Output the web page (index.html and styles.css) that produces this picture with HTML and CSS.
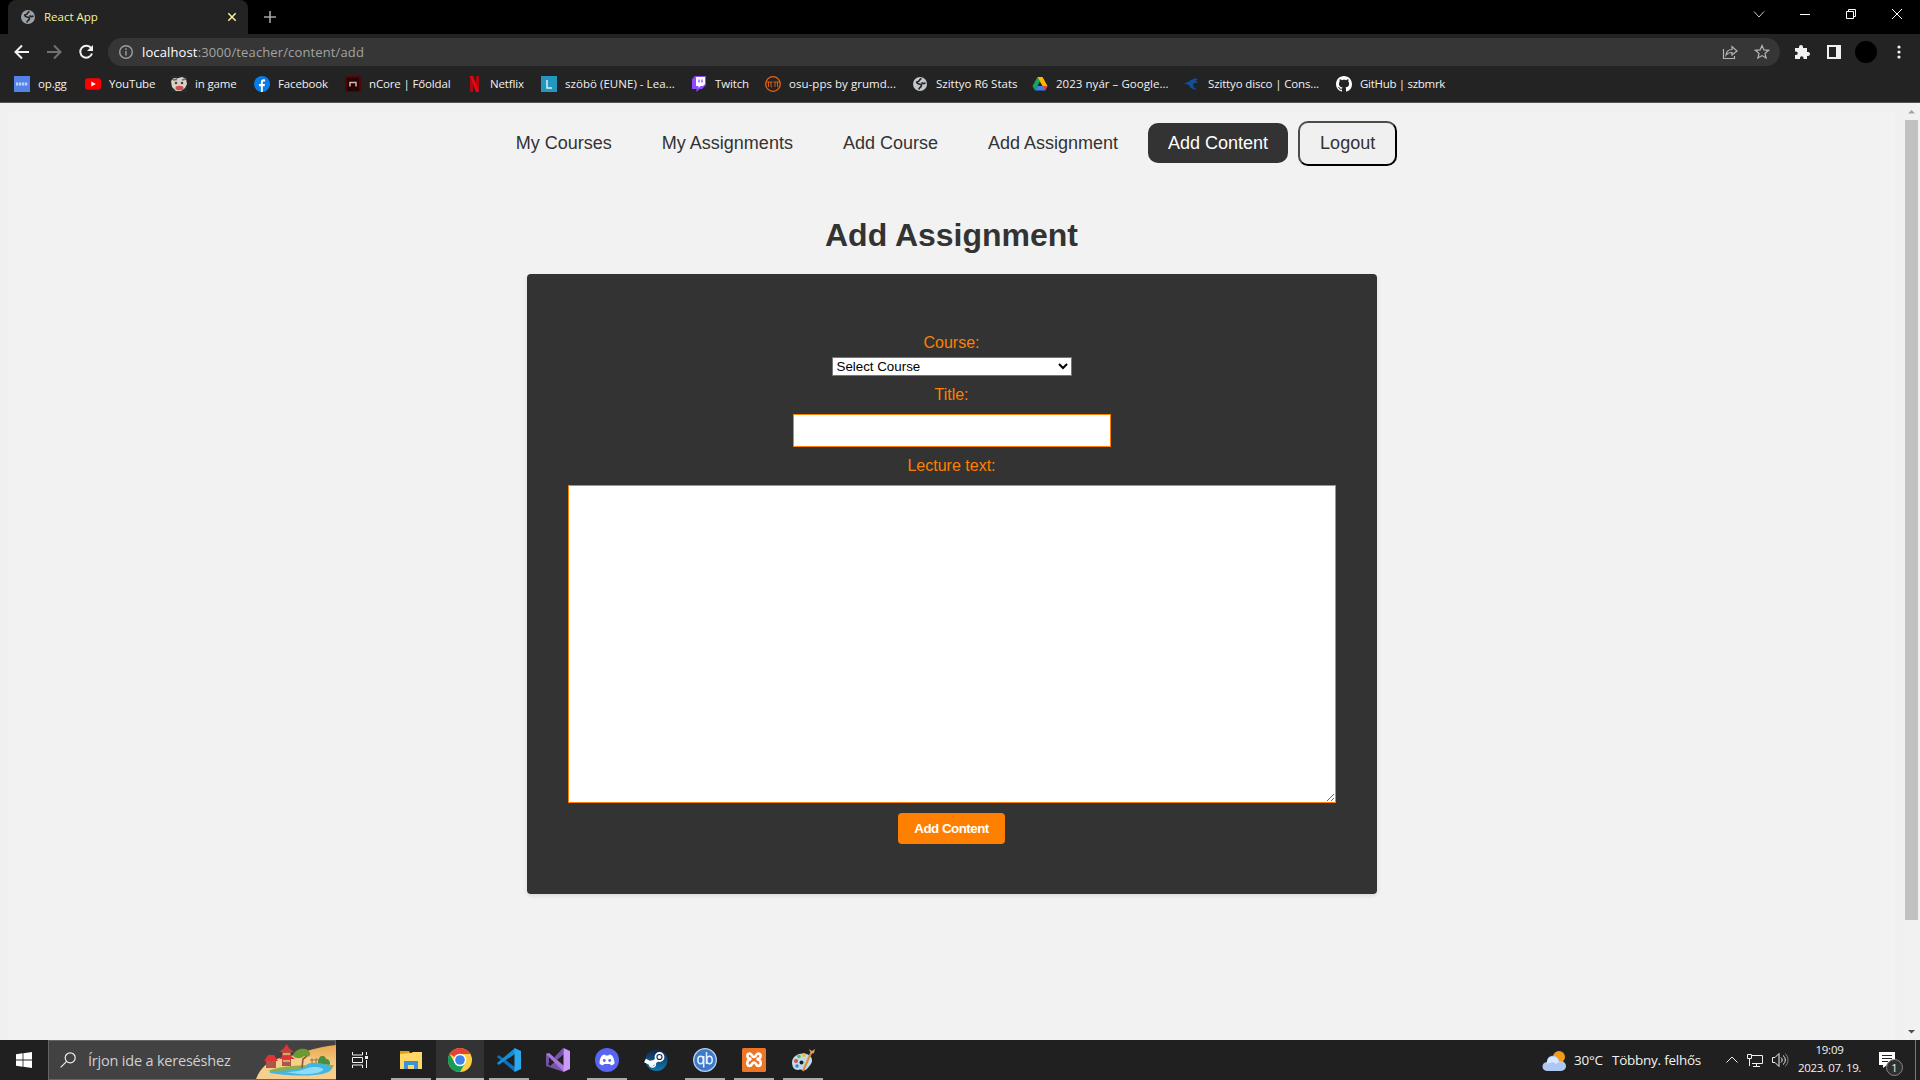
FILE: index.html
```html
<!DOCTYPE html>
<html lang="hu">
<head>
<meta charset="utf-8">
<title>React App</title>
<link rel="stylesheet" href="styles.css">
</head>
<body>
<svg class="defs" aria-hidden="true">
  <symbol id="globe" viewBox="0 0 16 16"><circle cx="8" cy="8" r="7" fill="currentColor"/><path d="M9.500 2.500C7 3 8 5.500 6 5.500S4.500 7.500 7 8s3 1 2 2.500-2 1-2 3M13.500 7c-2 1-3 1-4-.5" fill="none" stroke="#232323" stroke-width="1.700"/></symbol>
</svg>
<header class="browser">
  <div class="tabstrip">
    <div class="tab">
      <svg class="i16 favicon"><use href="#globe"/></svg>
      <span class="tab-title">React App</span>
      <svg class="tab-close" viewBox="0 0 10 10"><path d="M1.3 1.3l7.4 7.4M8.7 1.3 1.3 8.7"/></svg>
    </div>
    <svg class="newtab" viewBox="0 0 12 12"><path d="M6 0v12M0 6h12"/></svg>
    <div class="winbtns">
      <svg viewBox="0 0 12 12"><path d="M1 3.500 6 9l5-5.500"/></svg>
      <svg viewBox="0 0 12 12"><path d="M1 6.500h10"/></svg>
      <svg viewBox="0 0 12 12"><path d="M1.500 3.500h7v7h-7zM3.500 3.500v-2h7v7h-2"/></svg>
      <svg viewBox="0 0 12 12"><path d="M1 1l10 10M11 1 1 11"/></svg>
    </div>
  </div>
  <div class="toolbar">
    <svg class="nav-icon" viewBox="0 0 16 16"><path d="M15 8H2M8 1.500 1.500 8 8 14.500"/></svg>
    <svg class="nav-icon dim" viewBox="0 0 16 16"><path d="M1 8h13M8 1.500 14.500 8 8 14.500"/></svg>
    <svg class="nav-icon" viewBox="0 0 16 16"><path d="M13.200 4.200A6 6 0 1 0 14 9.500"/><path class="solid" d="M15 1v6H9z"/></svg>
    <div class="omnibox">
      <svg class="i16 info" viewBox="0 0 16 16"><circle cx="8" cy="8" r="6.300"/><path d="M8 7v4.500M8 4.300v1.600"/></svg>
      <span class="url"><b>localhost</b>:3000/teacher/content/add</span>
      <svg class="i16 share" viewBox="0 0 16 16"><path d="M1.500 5v9.500h11V12M4 11c.5-4 2.700-5.500 6-5.500V2.500L15 7l-5 4V8.500C7.500 8.500 5.500 9 4 11z"/></svg>
      <svg class="i16 star" viewBox="0 0 16 16"><path d="m8 1.600 1.900 4.300 4.700.4-3.600 3.100 1.100 4.600L8 11.600 3.900 14 5 9.400 1.400 6.300l4.700-.4z"/></svg>
    </div>
    <div class="tools">
      <svg class="i16" viewBox="0 0 16 16"><path fill="#f1f1f1" d="M1 4h4V3a2 2 0 0 1 4 0v1h4v4h1a2 2 0 0 1 0 4h-1v3H9.500v-1a1.700 1.700 0 0 0-3.500 0v1H1v-4h1a1.700 1.700 0 0 0 0-3.500H1z"/></svg>
      <svg class="i16" viewBox="0 0 16 16"><path fill="#f1f1f1" d="M1 1h14v14H1zM3 3v10h7V3z" fill-rule="evenodd"/></svg>
      <span class="avatar"></span>
      <svg class="i16" viewBox="0 0 16 16"><g fill="#f1f1f1"><circle cx="8" cy="3" r="1.600"/><circle cx="8" cy="8" r="1.600"/><circle cx="8" cy="13" r="1.600"/></g></svg>
    </div>
  </div>
  <nav class="bookmarks">
    <a><svg class="i16" viewBox="0 0 16 16"><path fill="#5383e8" d="M0 0h16v16H0z"/><path d="M2 8h12" stroke="#bdd0fa" stroke-width="3" stroke-dasharray="2.300 .7"/></svg><span>op.gg</span></a>
    <a><svg class="i16" viewBox="0 0 16 16"><rect y="2.300" width="16" height="11.500" rx="2.800" fill="#f00"/><path fill="#fff" d="m6.300 5.500 4.500 2.500-4.500 2.500z"/></svg><span>YouTube</span></a>
    <a><svg class="i16" viewBox="0 0 16 16"><path fill="#252b32" d="M0 0h16v16H0z"/><path fill="#d6d2c6" d="M0 5 3 2l3 .5L11 1l4 2 1 5-2 4-4 3H5l-4-4z"/><path d="M2 4l4-.5M15 3l-4 1" stroke="#875b52" stroke-width="1.500"/><circle cx="5" cy="7" r="1.300" fill="#444"/><circle cx="11" cy="7" r="1.300" fill="#444"/><ellipse cx="8.500" cy="12" rx="4" ry="2.300" fill="#d44d4e"/></svg><span>in game</span></a>
    <a><svg class="i16" viewBox="0 0 16 16"><circle cx="8" cy="8" r="8" fill="#087cea"/><path fill="#fff" d="M6.900 16v-5.700H5V8h1.900V6.300c0-2 1.100-3 2.800-3l1.400.1v2H10c-1 0-1.200.5-1.200 1.100V8H11l-.4 2.300H8.800V16z"/></svg><span>Facebook</span></a>
    <a><svg class="i16" viewBox="0 0 16 16"><rect width="16" height="16" rx="2" fill="#500507"/><rect x="2" y="2" width="12" height="13" fill="#250204"/><path d="M5 10.500V6.500h6v4" fill="none" stroke="#d6b5b5" stroke-width="1.500"/></svg><span>nCore | Főoldal</span></a>
    <a><svg class="i16" viewBox="0 0 16 16"><path fill="#b20710" d="M4 0h3v16H4zM10 0h3v16h-3z"/><path fill="#e50914" d="M4 0h3l6 16h-3z"/></svg><span>Netflix</span></a>
    <a class="wide"><svg class="i16" viewBox="0 0 16 16"><path fill="#2596be" d="M0 0h16v16H0z"/><path d="M6 4v8h5" fill="none" stroke="#d7f1fa" stroke-width="1.500"/></svg><span>szöbö (EUNE) - Lea...</span></a>
    <a><svg class="i16" viewBox="0 0 16 16"><path fill="#9146ff" d="M4 0h11v9l-4 4H8.500L5.500 16v-3H1V3z"/><path fill="#fff" d="M5 1h9v7l-2 2H9.500l-2 2v-2H5z"/><path d="M8 3.500v3M11 3.500v3" stroke="#9146ff" stroke-width="1.300"/></svg><span>Twitch</span></a>
    <a class="wide"><svg class="i16" viewBox="0 0 16 16"><circle cx="8" cy="8" r="7.300" fill="none" stroke="#ec6510" stroke-width="1.300"/><path d="M2 6h5.500M3.500 6v5M6 6v4.500l1 .5M8.500 6H14M10 6v5M12.500 6v4.500l1 .5" fill="none" stroke="#ec6510" stroke-width=".9"/></svg><span>osu-pps by grumd...</span></a>
    <a class="lit"><svg class="i16"><use href="#globe"/></svg><span>Szittyo R6 Stats</span></a>
    <a class="wide"><svg class="i16" viewBox="0 0 16 16"><path fill="#18a45c" d="M5.500 1 8 5.500 3 14.500.5 10z"/><path fill="#ffba00" d="M5.500 1h5l5 9h-5z"/><path fill="#3e82f1" d="M5.500 10h10L13 14.500H3z"/><path fill="#ea4335" d="M10.500 10h5L13 14.500z"/></svg><span>2023 nyár – Google...</span></a>
    <a><svg class="i16" viewBox="0 0 16 16"><path fill="#124f99" d="M0 8c3-2 5-2 7-4 2-1 4-2 7-1l-3 2 4 1-4 1c-3 1-3 3 2 7-5-1-7-2-8-5-2-1-3-1-5-1z"/></svg><span>Szittyo disco | Cons...</span></a>
    <a class="tight"><svg class="i16" viewBox="0 0 16 16"><path fill="#fff" d="M8 0C3.580 0 0 3.580 0 8c0 3.540 2.290 6.530 5.470 7.590.4.070.55-.17.55-.38 0-.19-.01-.82-.01-1.490-2.010.37-2.530-.49-2.690-.94-.09-.23-.48-.94-.82-1.130-.28-.15-.68-.52-.01-.53.63-.01 1.080.58 1.230.82.72 1.210 1.870.87 2.330.66.07-.52.28-.87.510-1.070-1.780-.2-3.640-.89-3.640-3.950 0-.87.310-1.590.82-2.150-.08-.2-.36-1.020.08-2.120 0 0 .67-.21 2.200.82.64-.18 1.320-.27 2-.27s1.360.09 2 .27c1.530-1.040 2.200-.82 2.200-.82.44 1.100.16 1.920.08 2.120.51.56.82 1.270.82 2.150 0 3.070-1.870 3.750-3.650 3.950.29.25.54.73.54 1.480 0 1.070-.01 1.930-.01 2.200 0 .21.15.46.55.38A8.010 8.010 0 0 0 16 8c0-4.420-3.580-8-8-8z"/></svg><span>GitHub | szbmrk</span></a>
  </nav>
</header>

<div class="viewport">
  <main class="page">
    <nav class="menu">
      <a>My Courses</a><a>My Assignments</a><a>Add Course</a><a>Add Assignment</a><a class="active">Add Content</a><button class="logout">Logout</button>
    </nav>
    <h1>Add Assignment</h1>
    <form class="card">
      <label for="course">Course:</label>
      <select id="course"><option>Select Course</option></select>
      <label for="title">Title:</label>
      <input id="title" type="text">
      <label for="lecture">Lecture text:</label>
      <textarea id="lecture"></textarea>
      <button class="submit" type="button">Add Content</button>
    </form>
  </main>
  <div class="scrollbar">
    <svg viewBox="0 0 17 17"><path fill="#a3a3a3" d="M5 10.500h7L8.500 7z"/></svg>
    <div class="thumb"></div>
    <svg viewBox="0 0 17 17"><path fill="#505050" d="M5 7h7l-3.500 3.500z"/></svg>
  </div>
</div>

<footer class="taskbar">
  <div class="start"><svg class="i16" viewBox="0 0 16 16"><path fill="#fff" d="M0 2.300 6.600 1.300v6.300H0zM7.400 1.200 16 0v7.600H7.400zM0 8.400h6.600v6.300L0 13.700zM7.400 8.400H16V16l-8.600-1.200z"/></svg></div>
  <div class="search">
    <svg class="lens" viewBox="0 0 16 16"><circle cx="10.200" cy="5.800" r="5"/><path d="M6.600 9.400.7 15.300"/></svg>
    <span>Írjon ide a kereséshez</span>
    <svg class="scene" viewBox="0 0 80 38">
      <defs><linearGradient id="sand" x2="0" y2="1"><stop stop-color="#e9a850"/><stop offset="1" stop-color="#ffe3ae"/></linearGradient></defs>
      <path fill="url(#sand)" d="M26 18C40 14 58 6 80 4v34H26z"/>
      <path fill="#f7cf8d" d="M0 38c5-12 11-17 24-21 14-5 34-3 56 9v12z"/>
      <path fill="#8fae4a" d="M12 30c14-6 36-6 66-6l-3 5-50 3z"/>
      <path fill="#42b5e5" d="M14 30c16 0 25-1 32-3s2-4 9-5c10-1 20 2 20 6 0 6-27 9-61 4z"/>
      <path fill="#8ddcf4" d="M30 31c16 0 18-4 27-5 8 0 13 2 9 4-7 4-23 4-36 1z"/>
      <path fill="#a9584a" d="M10 20h10v7H10zM26 11h9v14h-9z"/>
      <path fill="#df3434" d="m8 20 4-6h6l4 6zM23 11l5-4 2.500-4L33 7l5 4zM23 18l4-3h8l4 3z"/>
      <path fill="#d8a564" d="M27 12h7v2h-7zM27 19h7v2h-7z"/>
      <path d="m46 27 1-9 4-3" fill="none" stroke="#8b5a2c" stroke-width="1.600"/><path fill="#6b9a35" d="M37 15c1-8 15-10 17-3 1 4-3 4-6 3-3 3-8 3-11 0z"/>
      <path d="M54 19h13M56 17v5M60 17v5M64 17v5" stroke="#a06b3a"/><path fill="#46903e" d="M62 22c0-7 6-10 8-4 4 0 5 5 3 6z"/>
    </svg>
  </div>
  <div class="taskview"><svg viewBox="0 0 18 16"><path d="M1.500 0v3h10V0M1.500 16v-3h10v3M1.500 5.500h10v5h-10zM15.500 0v3M15.500 8v8"/><path class="solid" d="M14 4h3v3h-3z"/></svg></div>
  <div class="apps">
    <div class="app open"><svg viewBox="0 0 24 24"><path fill="#e59e0b" d="M1 3h9l2 3v3H1z"/><path fill="#ffd767" d="M1 6l11-1 2-1h9v17H1z"/><path fill="#3c92d6" d="M5 13h14v8h-4v-4H9v4H5z"/></svg></div>
    <div class="app open current"><svg viewBox="0 0 24 24"><circle cx="12" cy="12" r="12" fill="#ffce44"/><path fill="#df4437" d="M12 12 1.600 6A12 12 0 0 1 22.400 6H12z"/><path fill="#159c58" d="M1.600 6A12 12 0 0 0 12 24l5.200-9H6.800z"/><circle cx="12" cy="12" r="6.300" fill="#fff"/><circle cx="12" cy="12" r="4.800" fill="#3d83ee"/></svg></div>
    <div class="app open"><svg viewBox="0 0 24 24"><path fill="#0874bd" d="m1.500 7 16.500 12v5L0 9z"/><path fill="#168ed5" d="M0 15 18 0v6L1.500 17z"/><path fill="#29a9ef" d="m17.500 0 6.500 3v18l-6.500 3z"/></svg></div>
    <div class="app"><svg viewBox="0 0 24 24"><path fill="#7455a7" d="M0 6 3 5 18 18v6L0 18zM3 9v6l3-3zM18 6 4 18l-2-2L17 0z" fill-rule="evenodd"/><path fill="#a875dc" d="m0 6 3-1 15 13v6z"/><path fill="#ca9bf9" d="m17.500 0 6.500 3v18l-6.500 3z"/></svg></div>
    <div class="app open"><svg viewBox="0 0 24 24"><circle cx="12" cy="12" r="12" fill="#5865f2"/><path fill="#fff" d="M7 7.500C9 6.500 9.500 6.500 10 6.500l.5 1h3l.5-1c1 0 2 .5 3 1 2 3 2.500 5 2.500 8-1 1-2 1.500-3.500 2L15 16H9l-1 1.500c-1.500-.5-2.500-1-3.500-2C4.500 12.500 5 10 7 7.500z"/><circle cx="9.300" cy="12.500" r="1.400" fill="#5865f2"/><circle cx="14.700" cy="12.500" r="1.400" fill="#5865f2"/></svg></div>
    <div class="app"><svg viewBox="0 0 24 24"><defs><linearGradient id="steam" x2="0" y2="1"><stop stop-color="#142447"/><stop offset="1" stop-color="#1179ae"/></linearGradient></defs><circle cx="12.500" cy="12" r="11" fill="url(#steam)"/><path d="M1 12.500 8 16l7-6" fill="none" stroke="#fff" stroke-width="4"/><circle cx="15.500" cy="9" r="4" fill="#142447" stroke="#fff" stroke-width="1.800"/><circle cx="15.500" cy="9" r="2" fill="#fff"/><circle cx="8.500" cy="16" r="3" fill="none" stroke="#fff" stroke-width="1.300"/></svg></div>
    <div class="app open"><svg viewBox="0 0 24 24"><circle cx="12" cy="12" r="11.300" fill="#3f79c9" stroke="#b5d3f4" stroke-width="1.300"/><g fill="none" stroke="#e6f1ff" stroke-width="1.500"><ellipse cx="7.600" cy="12" rx="2.700" ry="3.700"/><path d="M10.700 8v11.500M13.500 4v12"/><ellipse cx="16.500" cy="12" rx="2.700" ry="3.700"/></g></svg></div>
    <div class="app open"><svg viewBox="0 0 24 24"><rect width="24" height="24" rx="1.500" fill="#ec7526"/><path d="M9.500 10.500C5 12 4 5.500 7.500 5.500c3 0 2 3.500 4.500 3.500s1.500-3.500 4.500-3.500C20 5.500 19 12 14.500 10.500M9 11.500c-5 0-4.500 6.500-1.500 6.500s2-3.500 4.500-3.500 1.500 3.500 4.500 3.500 3.500-6.500-1.500-6.500" fill="none" stroke="#fff" stroke-width="2.600"/></svg></div>
    <div class="app open"><svg viewBox="0 0 24 24"><path fill="#bcdcec" d="M1 14C2 5 15 3 20 9c3 5-1 8-4 12-4 3-6-1-9 1-4 0-6-3-6-8z"/><circle cx="5" cy="13" r="2" fill="#df4c42"/><circle cx="8" cy="8.500" r="1.800" fill="#68b446"/><circle cx="13" cy="7" r="1.900" fill="#eabf2b"/><circle cx="10.500" cy="14.500" r="2" fill="#202020"/><circle cx="6" cy="18" r="1.700" fill="#3780d8"/><path d="m12 23 8-18" stroke="#e5892b" stroke-width="2"/><path fill="#d5a06b" d="M18 1l3 2 3-2-1 4-3 1z"/></svg></div>
  </div>
  <div class="weather">
    <svg viewBox="0 0 24 20"><circle cx="17" cy="6" r="6" fill="#f59b19"/><path fill="#adc9f3" d="M5 20c-6 0-6-9 0-9C5 3 16 3 17 10c9-1 9 10 2 10z"/><path fill="#d9e7ff" d="M5 12c0-8 11-8 12-1l-3 2c-4-4-6 0-9-1z"/></svg>
    <span class="temp">30°C</span><span class="sky">Többny. felhős</span>
  </div>
  <div class="tray">
    <svg viewBox="0 0 12 16"><path d="M.5 10.500 6 5l5.500 5.500"/></svg>
    <svg viewBox="0 0 16 16"><path d="M5 3.500h10.500v8H5M.5 2.500h4v4h-4zM2.500 6v8M6 14.500h7M9.500 11.500v3"/></svg>
    <svg viewBox="0 0 17 16"><path d="M.5 5.500H3l4-4v13l-4-4H.5zM9 5.500c1.500 1 1.500 4 0 5M11 3.500c3 2 3 7 0 9"/><path opacity=".45" d="M13 1.500c4 3 4 10 0 13"/></svg>
  </div>
  <div class="clock"><span>19:09</span><span class="date">2023. 07. 19.</span></div>
  <div class="notice">
    <svg viewBox="0 0 16 16"><path fill="#fff" d="M0 0h16v13H8l-4 3v-3H0z"/><path d="M3 3.500h10M3 6.500h10M3 9.500h6" stroke="#222"/></svg>
    <span class="badge">1</span>
  </div>
  <div class="peek"></div>
</footer>
</body>
</html>
```
FILE: styles.css
```css
* { box-sizing: border-box; }
body { margin: 0; width: 1920px; height: 1080px; overflow: hidden; display: flex; flex-direction: column; background: #f0f0f0; font-family: "Open Sans", "Noto Sans", sans-serif; }
svg { display: block; flex: none; }
.defs { position: absolute; width: 0; height: 0; }
.i16 { width: 16px; height: 16px; }

.browser { height: 103px; background: #232323; border-bottom: 1px solid #535353; flex: none; }
.tabstrip { height: 34px; background: #000; display: flex; align-items: center; padding-left: 8px; }
.tab { width: 240px; height: 34px; background: #232323; border-radius: 8px 8px 0 0; display: flex; align-items: center; padding: 0 11px 0 12px; color: #f9f29b; font-size: 11.5px; }
.favicon { color: #9aa0a6; }
.tab-title { margin: -1px 0 0 8px; flex: 1; }
.tab-close { width: 10px; height: 10px; fill: none; stroke: #f9f29b; stroke-width: 1.5; }
.newtab { width: 12px; height: 12px; margin-left: 16px; stroke: #a5a5a5; stroke-width: 1.600; }
.winbtns { margin-left: auto; display: flex; gap: 34px; padding: 0 17px 6px 0; }
.winbtns svg { width: 12px; height: 12px; fill: none; stroke: #fff; stroke-width: 1; }
.winbtns svg:first-child { stroke: #c8c8c8; }

.toolbar { height: 36px; display: flex; align-items: center; padding-left: 14px; }
.nav-icon { width: 16px; height: 16px; margin-right: 16px; fill: none; stroke: #f1f1f1; stroke-width: 2; }
.nav-icon.dim { stroke: #717171; }
.solid { fill: #f1f1f1; stroke: none; }
.omnibox { width: 1672px; height: 28px; margin: 0 0 0 -2px; border-radius: 14px; background: #363636; display: flex; align-items: center; padding: 0 10px; font-size: 13px; }
.info { fill: none; stroke: #9aa0a6; stroke-width: 1.400; }
.url { margin-left: 8px; flex: 1; color: #a3a3a3; letter-spacing: .13px; }
.url b { font-weight: 400; color: #fff; }
.share, .star { fill: none; stroke: #b5b5b5; stroke-width: 1.200; }
.share { margin-right: 16px; }
.tools { display: flex; align-items: center; margin-left: 14px; gap: 16px; }
.avatar { width: 22px; height: 22px; border-radius: 50%; background: #000; margin: 0 -2px 0 -3px; }

.bookmarks { height: 28px; padding-left: 14px; display: grid; align-items: center; grid-template-columns: 71px 86px 83px 91px 121px 75px 150px 74px 147px 120px 152px 152px 120px; color: #f1f1f1; font-size: 11.5px; letter-spacing: -.15px; }
.bookmarks a { display: flex; align-items: center; gap: 8px; white-space: nowrap; }
.bookmarks span { margin-top: -1px; }
.bookmarks .wide { letter-spacing: .04px; }
.bookmarks .tight { letter-spacing: -.3px; }
.bookmarks .lit { letter-spacing: 0; }
.bookmarks .lit svg { color: #c3c6ca; }

.viewport { flex: 1; display: flex; font-family: "Liberation Sans", Arial, sans-serif; }
.page { flex: 1; margin: 8px 8px 0; background: #f2f2f2; display: flex; flex-direction: column; align-items: center; }
.menu { display: flex; align-items: center; gap: 10px; margin-top: 10px; padding-right: 10px; font-size: 18px; color: #333; line-height: 20px; }
.menu a { padding: 10px 20px; border-radius: 10px; margin-bottom: 1px; }
.menu .active { background: #333; color: #fff; }
.logout { font: inherit; color: #333; background: #f0f0f0; padding: 9px 20px 11px; border: 2px solid; border-color: #4c4c4c #000 #000 #4c4c4c; border-radius: 10px; height: 45px; }
h1 { margin: 51px 0 20px; font-size: 32px; line-height: 37px; color: #333; }
.card { width: 850px; height: 620px; border-radius: 4px; background: #333; box-shadow: 0 2px 4px rgba(0,0,0,.1); display: flex; flex-direction: column; align-items: center; padding-top: 60px; color: #ff8000; font-size: 16px; line-height: 18px; }
select { width: 240px; height: 19px; margin: 5px 0 10px; padding: 0; font: 13.333px "Liberation Sans", Arial, sans-serif; background: #fff; color: #000; border: 1px solid #767676; border-radius: 0; }
input { width: 318px; height: 33px; margin: 10px 0; border: 1px solid #ff8000; background: #fff; }
textarea { width: 768px; height: 318px; margin: 10px 0; border: 1px solid #ff8000; background: #fff; }
.submit { width: 107px; height: 31px; padding: 0; border: 0; border-radius: 4px; background: #ff8000; color: #fff; font: bold 13.333px "Liberation Sans", Arial, sans-serif; letter-spacing: -.5px; }
.scrollbar { width: 17px; background: #f1f1f1; display: flex; flex-direction: column; }
.scrollbar svg { width: 17px; height: 17px; }
.thumb { width: 13px; height: 800px; margin: 0 2px auto; background: #c1c1c1; }

.taskbar { height: 40px; flex: none; background: #202020; display: flex; color: #f3f3f3; }
.start { width: 48px; display: grid; place-items: center; }
.search { width: 288px; background: #424242; border: 1px solid #656565; display: flex; align-items: center; padding-left: 11px; font-size: 14.500px; color: #d0d0d0; letter-spacing: -.2px; }
.lens { width: 16px; height: 16px; fill: none; stroke: #eee; stroke-width: 1.200; }
.search span { margin-left: 12px; flex: 1; white-space: nowrap; }
.scene { width: 80px; height: 38px; margin-right: -1px; }
.taskview { width: 51px; display: flex; align-items: center; padding-left: 15px; }
.taskview svg { width: 18px; height: 16px; fill: none; stroke: #f1f1f1; }
.apps { display: flex; gap: 1px; }
.app { width: 48px; height: 40px; display: grid; place-items: center; }
.app svg { width: 24px; height: 24px; }
.app.open { background: linear-gradient(#aaa, #aaa) center bottom / 40px 2px no-repeat; }
.app.current { background: linear-gradient(#bbb, #bbb) center bottom / 48px 2px no-repeat #333; }
.weather { margin-left: auto; display: flex; align-items: center; font-size: 13.500px; white-space: nowrap; }
.weather svg { width: 24px; height: 20px; margin: 2px 8px 0 0; }
.temp { width: 38px; letter-spacing: -.2px; }
.sky { width: 114px; letter-spacing: -.25px; }
.tray { display: flex; align-items: center; width: 72px; gap: 9px; }
.tray svg { height: 16px; fill: none; stroke: #f1f1f1; }
.tray svg:nth-child(1) { width: 12px; }
.tray svg:nth-child(2) { width: 16px; }
.tray svg:nth-child(3) { width: 17px; }
.clock { width: 63px; display: flex; flex-direction: column; align-items: center; font-size: 11.500px; line-height: 18px; padding-top: 1px; white-space: nowrap; letter-spacing: -.25px; }
.date { letter-spacing: -.35px; }
.notice { width: 54px; padding: 12px 0 0 18px; position: relative; }
.notice svg { width: 16px; height: 16px; }
.badge { position: absolute; left: 25px; top: 19px; width: 17px; height: 17px; border: 1px solid #888; border-radius: 50%; background: #303030; font-size: 11px; line-height: 15px; text-align: center; }
.peek { width: 5px; border-left: 1px solid #777; }
```
